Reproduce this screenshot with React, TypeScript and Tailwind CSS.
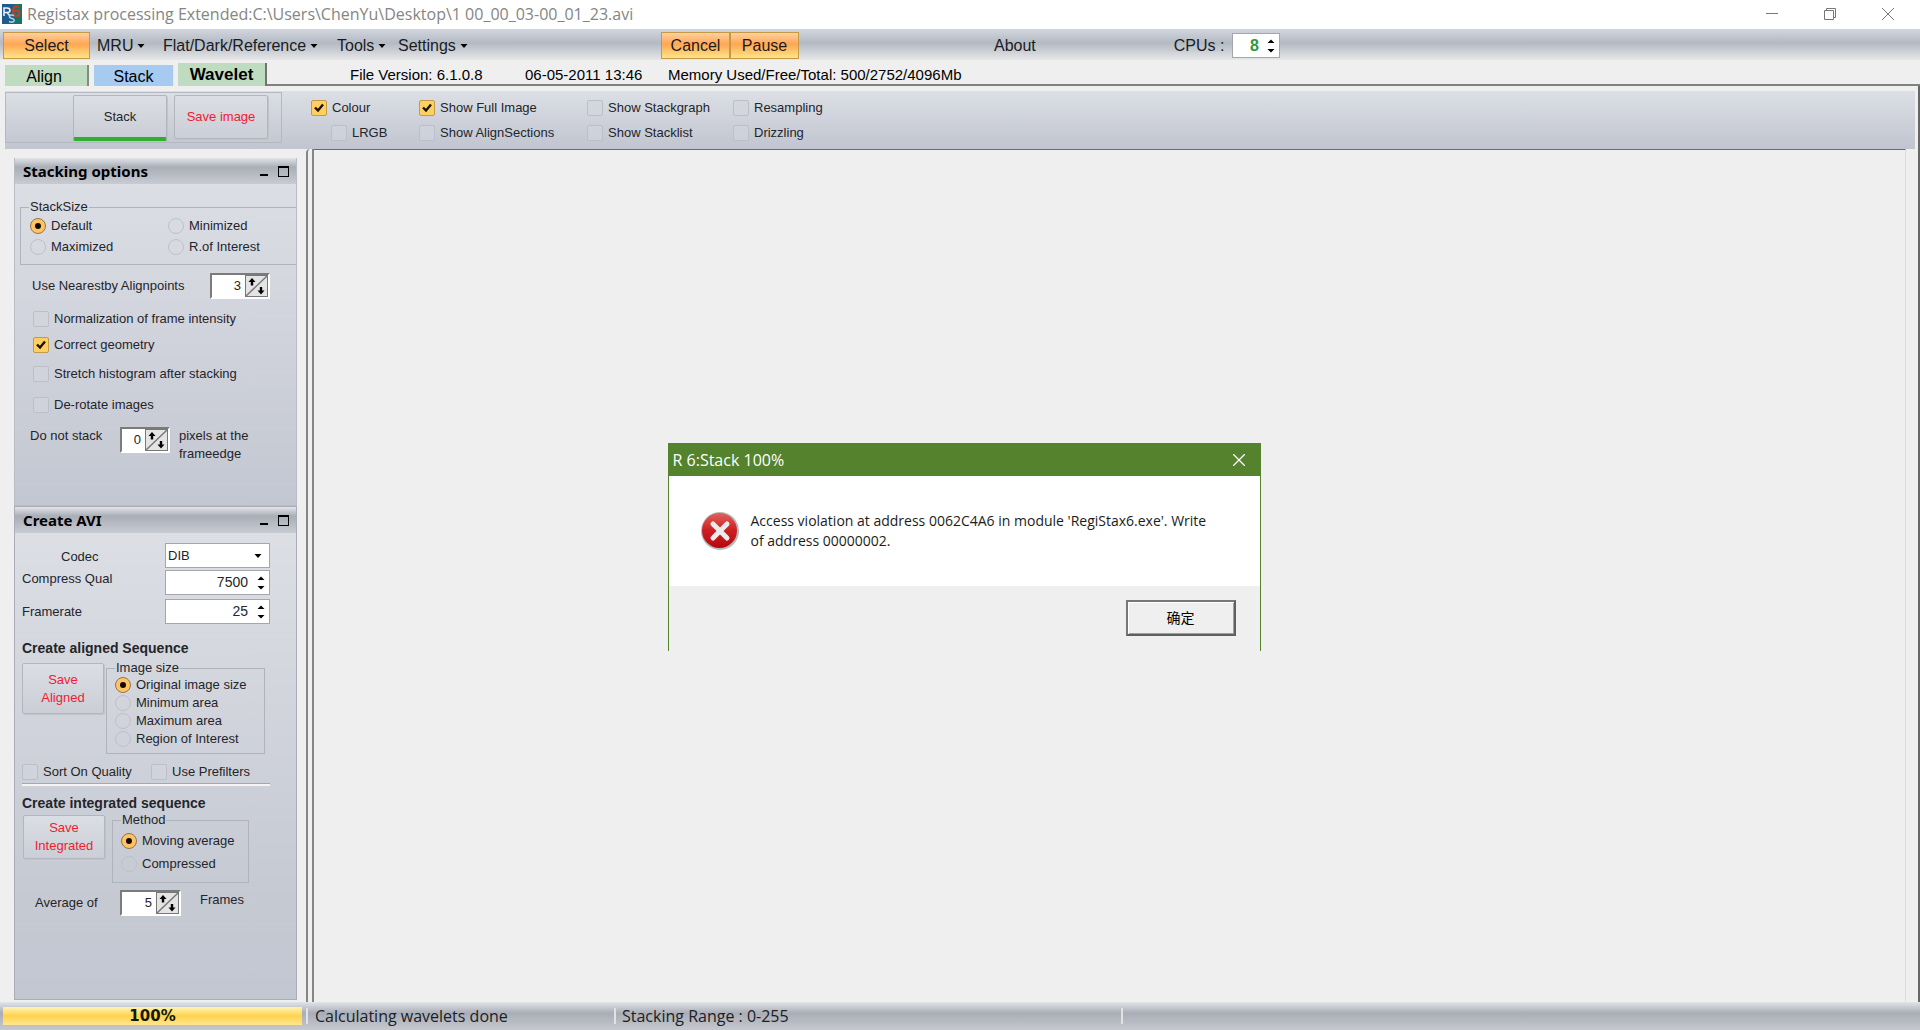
import { useState, type ReactNode } from "react"
import clsx from "clsx"

const menus = [
  { label: "MRU", className: "w-[66px]" },
  { label: "Flat/Dark/Reference", className: "w-[174px]" },
  { label: "Tools", className: "w-[61px]" },
  { label: "Settings", className: "w-[80px]" },
]

function Check({ label, checked = false, className }: { label: string; checked?: boolean; className?: string }) {
  return (
    <label className={clsx("flex h-4 items-center gap-[5px] whitespace-nowrap", className)}>
      <span className="relative flex size-4 shrink-0">
        <input
          type="checkbox"
          defaultChecked={checked}
          className="peer size-4 appearance-none rounded-[2px] border border-[#bbbfca] bg-[#d3d6dd]/60 checked:border-[#c29a4c] checked:bg-[#ffcf62]"
        />
        <svg viewBox="0 0 16 16" className="pointer-events-none absolute inset-0 hidden size-4 peer-checked:block">
          <path d="M4 7.5 L7 10.5 L12 4.5" fill="none" stroke="#1c1206" strokeWidth="2.4" />
        </svg>
      </span>
      {label}
    </label>
  )
}

function Radio({ name, label, checked = false }: { name: string; label: string; checked?: boolean }) {
  return (
    <label className="flex h-4 items-center gap-[5px] leading-4 whitespace-nowrap">
      <span className="relative flex size-4 shrink-0">
        <input
          type="radio"
          name={name}
          defaultChecked={checked}
          className="peer size-4 appearance-none rounded-full border border-[#bdc1ca] checked:border-[#96763f] checked:bg-[#ffc266]"
        />
        <span className="pointer-events-none absolute inset-[5px] hidden rounded-full bg-[#120b04] peer-checked:block" />
      </span>
      {label}
    </label>
  )
}

function ArrowSpin({ id, value, className }: { id: string; value: string; className?: string }) {
  return (
    <span className={clsx("flex h-[26px] border-2 border-t-[#7b7b7b] border-l-[#7b7b7b] border-r-white border-b-white bg-white", className)}>
      <input id={id} defaultValue={value} className="w-0 min-w-0 flex-1 bg-white pr-1 text-right text-[13px] outline-none" />
      <button aria-label="Change value" className="w-[23px] shrink-0 border border-[#777] bg-[#e4e4e4]">
        <svg viewBox="0 0 21 20" className="size-full">
          <path d="M0 20 L21 0" stroke="#777" strokeWidth="1.4" />
          <path d="M6 2 L9.5 6 H7.2 V9.5 H4.8 V6 H2.5 Z M15 18.5 L18.5 14.5 H16.2 V11 H13.8 V14.5 H11.5 Z" fill="#000" />
        </svg>
      </button>
    </span>
  )
}

function UpDown() {
  return (
    <svg viewBox="0 0 8 16" className="h-4 w-2">
      <path d="M4 1.5 L7.5 5 H0.5 Z M4 14.5 L0.5 11 H7.5 Z" fill="#000" />
    </svg>
  )
}

function PlainSpin({ id, value, className, inputClass }: { id: string; value: string; className?: string; inputClass?: string }) {
  return (
    <span className={clsx("flex h-[25px] items-center border border-[#a3a6ae] bg-white", className)}>
      <input id={id} defaultValue={value} className={clsx("w-0 min-w-0 flex-1 text-right outline-none", inputClass)} />
      <button aria-label="Change value" className="flex w-4 justify-center">
        <UpDown />
      </button>
    </span>
  )
}

function PanelHeader({ title }: { title: string }) {
  return (
    <header className="flex h-[26px] items-center bg-linear-to-b from-[#e2e4e9] via-[#a9aeb7] via-35% to-[#c8cbd2] pr-[7px] pl-2">
      <h2 className="flex-1 font-['Noto_Sans'] text-[15px] font-bold text-black">{title}</h2>
      <button aria-label="Minimize" className="mr-[10px] flex h-[11px] w-2 items-end">
        <span className="mb-px h-[2px] w-2 bg-black" />
      </button>
      <button aria-label="Maximize" className="h-[11px] w-[11px] border border-t-2 border-black" />
    </header>
  )
}

function RaisedButton({ children, className }: { children: ReactNode; className?: string }) {
  return (
    <button
      className={clsx(
        "rounded-[2px] border border-[#b3b6bf] bg-linear-to-b from-[#dcdee5] to-[#cbced6] text-[13px] leading-[18px] shadow-[1px_1px_0_#c0c3ca]",
        className,
      )}
    >
      {children}
    </button>
  )
}

function OrangeButton({ children, className }: { children: ReactNode; className?: string }) {
  return (
    <button
      className={clsx(
        "h-[27px] border border-[#c49a45] bg-linear-to-b from-[#ffcf9c] via-[#ffa653] via-45% to-[#ffe587] text-base",
        className,
      )}
    >
      {children}
    </button>
  )
}

function TitleBar() {
  return (
    <header className="flex h-[29px] items-start bg-white pl-[2px] text-[#858585]">
      <svg viewBox="0 0 20 20" className="mt-1 size-5">
        <rect width="20" height="20" fill="#1d5c8c" />
        <path d="M11 0 H20 V20 H11 Z" fill="#1a7368" />
        <path d="M2 12 V4 H5 Q8 4 8 6.5 Q8 8.5 5 8.5 H2 M5 8.5 L8 12" fill="none" stroke="#e8f3fa" strokeWidth="1.6" />
        <path d="M17 3 Q11 1 11 7 Q11 12 14.5 12 Q17.5 12 17.5 9 Q17.5 6.5 14.5 6.5 Q12 6.5 11 8" fill="none" stroke="#c2402a" strokeWidth="2" />
        <path d="M12 11.5 Q8 10 7.5 12.5 Q7.5 14 10 14.5 Q12.5 15 12 17 Q11 19 7 17.5" fill="none" stroke="#a8d8ee" strokeWidth="1.6" />
      </svg>
      <h1 className="ml-[5px] flex-1 font-['Open_Sans'] text-base leading-[29px]">
        Registax processing Extended:C:\Users\ChenYu\Desktop\1 00_00_03-00_01_23.avi
      </h1>
      <div className="flex h-[28px] items-center gap-[46px] pr-[26px]">
        <button aria-label="Minimize">
          <svg viewBox="0 0 12 12" className="size-3"><path d="M0 5.5 H12" stroke="#777" /></svg>
        </button>
        <button aria-label="Restore">
          <svg viewBox="0 0 12 12" className="size-3" fill="none" stroke="#777">
            <path d="M0.5 2.5 H9.5 V11.5 H0.5 Z M2.5 2.5 V0.5 H11.5 V9.5 H9.5" />
          </svg>
        </button>
        <button aria-label="Close">
          <svg viewBox="0 0 12 12" className="size-3"><path d="M0 0 L12 12 M12 0 L0 12" stroke="#777" /></svg>
        </button>
      </div>
    </header>
  )
}

function MenuBar() {
  return (
    <nav className="flex h-[31px] items-center bg-linear-to-b from-[#d3d6de] via-[#b3bac3] via-45% to-[#e6e7e9] pt-[2px] pl-[3px] text-base text-[#1b1b1f]">
      <OrangeButton className="w-[87px]">Select</OrangeButton>
      <div className="ml-[7px] flex w-[564px]">
        {menus.map((menu) => (
          <button key={menu.label} className={clsx("flex items-center gap-1", menu.className)}>
            {menu.label}
            <svg viewBox="0 0 8 4" className="h-1 w-2"><path d="M0.5 0 H7.5 L4 4 Z" fill="#000" /></svg>
          </button>
        ))}
      </div>
      <OrangeButton className="w-[69px]">Cancel</OrangeButton>
      <OrangeButton className="w-[69px]">Pause</OrangeButton>
      <button className="ml-[195px]">About</button>
      <label htmlFor="cpus" className="ml-[138px] w-[58px]">CPUs :</label>
      <PlainSpin id="cpus" value="8" className="w-[48px]" inputClass="pr-1 text-base font-bold text-[#2e9a3a]" />
    </nav>
  )
}

function TabRow() {
  return (
    <div className="flex h-[26px] items-end bg-[#efefef] pl-[5px] text-black">
      <div role="tablist" className="flex items-end text-base">
        <button role="tab" className="mr-[5px] h-[21px] w-[84px] border-r-2 border-[#858a85] bg-[#bfdcc0] pr-1 leading-[23px]">Align</button>
        <button role="tab" className="mr-1 h-[21px] w-20 border-r border-[#e4e9f0] bg-[#a6caf0] leading-[23px]">Stack</button>
        <button role="tab" aria-selected className="h-[23px] w-[89px] border-r-2 border-[#707570] bg-[#c0dcc0] text-[17px] leading-[22px] font-bold">Wavelet</button>
      </div>
      <div className="flex h-full flex-1 border-b-2 border-[#80827f] text-[15px] leading-[29px] whitespace-nowrap">
        <span className="ml-[83px] w-[175px]">File Version: 6.1.0.8</span>
        <span className="w-[143px]">06-05-2011 13:46</span>
        <span>Memory Used/Free/Total: 500/2752/4096Mb</span>
      </div>
    </div>
  )
}

function Toolbar() {
  return (
    <div className="mr-[3px] ml-[5px] flex h-[58px] bg-linear-to-b from-[#dcdfe5] to-[#c1c5cf]">
      <div className="mt-px flex h-[51px] w-[277px] items-start gap-[7px] border border-[#b4b8c1] pt-[2px] pl-[67px]">
        <RaisedButton className="h-[46px] w-[94px] border-b-4 border-b-[#2fae2f]">Stack</RaisedButton>
        <RaisedButton className="h-[44px] w-[94px] text-[#f01c30]">Save image</RaisedButton>
      </div>
      <div className="ml-[29px] flex pt-[9px]">
        <div className="flex w-[108px] flex-col gap-[9px]">
          <Check label="Colour" checked />
          <Check label="LRGB" className="ml-5" />
        </div>
        <div className="flex w-[168px] flex-col gap-[9px]">
          <Check label="Show Full Image" checked />
          <Check label="Show AlignSections" />
        </div>
        <div className="flex w-[146px] flex-col gap-[9px]">
          <Check label="Show Stackgraph" />
          <Check label="Show Stacklist" />
        </div>
        <div className="flex flex-col gap-[9px]">
          <Check label="Resampling" />
          <Check label="Drizzling" />
        </div>
      </div>
    </div>
  )
}

function StackingOptions() {
  return (
    <section className="h-[348px] border border-t-0 border-[#b9bcc5] bg-linear-to-b from-[#dee0e6] to-[#c3c7d1]">
      <PanelHeader title="Stacking options" />
      <fieldset className="mt-[15px] ml-[5px] h-[66px] border border-r-0 border-[#b0b3bc] pt-[3px] pl-[9px]">
        <legend className="-ml-px px-px leading-4">StackSize</legend>
        <div className="grid grid-cols-[138px_1fr] gap-y-[5px]">
          <Radio name="stacksize" label="Default" checked />
          <Radio name="stacksize" label="Minimized" />
          <Radio name="stacksize" label="Maximized" />
          <Radio name="stacksize" label="R.of Interest" />
        </div>
      </fieldset>
      <div className="mt-2 flex items-center pl-[17px]">
        <label htmlFor="alignpoints" className="w-[178px]">Use Nearestby Alignpoints</label>
        <ArrowSpin id="alignpoints" value="3" className="w-[60px]" />
      </div>
      <div className="flex flex-col pt-3 pl-[18px]">
        <Check label="Normalization of frame intensity" />
        <Check label="Correct geometry" checked className="mt-[10px]" />
        <Check label="Stretch histogram after stacking" className="mt-[13px]" />
        <Check label="De-rotate images" className="mt-[15px]" />
      </div>
      <div className="mt-[14px] flex items-start pl-[15px] leading-[18px]">
        <label htmlFor="edge" className="w-[90px]">Do not stack</label>
        <ArrowSpin id="edge" value="0" className="w-[50px]" />
        <span className="ml-[9px] w-20">pixels at the frameedge</span>
      </div>
    </section>
  )
}

function CreateAvi() {
  return (
    <section className="flex-1 border border-[#a9adb8] bg-linear-to-b from-[#dee0e6] via-[#c5c9d2] via-80% to-[#c3c7d1]">
      <PanelHeader title="Create AVI" />
      <div className="grid grid-cols-[143px_105px] pt-[10px] pl-[7px]">
        <label htmlFor="codec" className="pt-1 pl-[39px]">Codec</label>
        <span className="relative flex h-[25px]">
          <select id="codec" className="w-full appearance-none border border-[#a3a6ae] bg-white pl-[2px] text-[13px] outline-none">
            <option>DIB</option>
          </select>
          <svg viewBox="0 0 8 4" className="pointer-events-none absolute top-[11px] right-2 h-1 w-2">
            <path d="M0.5 0 H7.5 L4 4 Z" fill="#000" />
          </svg>
        </span>
        <label htmlFor="qual" className="pt-px">Compress Qual</label>
        <PlainSpin id="qual" value="7500" className="mt-[2px]" inputClass="pr-[5px] text-[14px]" />
        <label htmlFor="rate" className="pt-[7px]">Framerate</label>
        <PlainSpin id="rate" value="25" className="mt-1" inputClass="pr-[5px] text-[14px]" />
      </div>
      <h3 className="mt-4 pl-[7px] text-[14px] leading-4 font-bold">Create aligned Sequence</h3>
      <div className="flex items-start pl-[7px]">
        <RaisedButton className="mt-[7px] h-[51px] w-[82px] text-[#f01c30]">
          Save<br />Aligned
        </RaisedButton>
        <fieldset className="mt-1 ml-[2px] h-[94px] w-[159px] border border-[#b0b3bc] pl-2">
          <legend className="px-px leading-4">Image size</legend>
          <div className="flex flex-col gap-[2px] pt-px">
            <Radio name="imagesize" label="Original image size" checked />
            <Radio name="imagesize" label="Minimum area" />
            <Radio name="imagesize" label="Maximum area" />
            <Radio name="imagesize" label="Region of Interest" />
          </div>
        </fieldset>
      </div>
      <div className="mt-[10px] ml-[7px] flex w-[248px] border-b-2 border-[#f4f4f4] pb-1 shadow-[inset_0_-1px_0_#a5a8b0]">
        <Check label="Sort On Quality" className="w-[129px]" />
        <Check label="Use Prefilters" />
      </div>
      <h3 className="mt-[9px] pl-[7px] text-[14px] leading-4 font-bold">Create integrated sequence</h3>
      <div className="flex items-start pl-2">
        <RaisedButton className="mt-1 h-[44px] w-[82px] text-[#f01c30]">
          Save<br />Integrated
        </RaisedButton>
        <fieldset className="mt-px ml-[7px] h-[71px] w-[137px] border border-[#b0b3bc] pl-2">
          <legend className="px-px leading-4">Method</legend>
          <div className="flex flex-col gap-[7px] pt-[5px]">
            <Radio name="method" label="Moving average" checked />
            <Radio name="method" label="Compressed" />
          </div>
        </fieldset>
      </div>
      <div className="mt-[7px] flex items-start pl-5">
        <label htmlFor="average" className="mt-[3px] w-[85px]">Average of</label>
        <ArrowSpin id="average" value="5" className="w-[61px]" />
        <span className="ml-[19px]">Frames</span>
      </div>
    </section>
  )
}

function StatusBar() {
  return (
    <footer className="flex h-[28px] items-center bg-linear-to-b from-[#e3e4ea] via-[#a9adb6] via-40% to-[#c6c8ce] pl-[3px] font-['Open_Sans'] text-base text-[#202024]">
      <div
        role="progressbar"
        aria-valuenow={100}
        className="h-[18px] w-[299px] bg-linear-to-b from-[#fff3b0] via-[#ffd24a] via-50% to-[#ffe78c] text-center font-['DejaVu_Sans'] text-[15px] leading-[18px] font-bold text-[#141a00]"
      >
        100%
      </div>
      <span className="ml-1 h-4 w-[308px] border-l-2 border-[#e2e2e2] pl-[7px] leading-4">Calculating wavelets done</span>
      <span className="h-4 w-[507px] border-l-2 border-[#e2e2e2] pl-[6px] leading-4">Stacking Range : 0-255</span>
      <span className="h-4 border-l-2 border-[#e2e2e2]" />
    </footer>
  )
}

function ErrorDialog({ onClose }: { onClose: () => void }) {
  return (
    <div className="fixed inset-x-0 top-[443px] flex justify-center pl-2">
      <div role="alertdialog" aria-labelledby="error-title" className="w-[593px] border-x border-[#55822d] bg-[#efefef]">
        <div className="flex h-[33px] items-center bg-[#55822d] pr-[15px] pl-1 text-white">
          <h2 id="error-title" className="flex-1 font-['Open_Sans'] text-base">R 6:Stack 100%</h2>
          <button aria-label="Close" onClick={onClose}>
            <svg viewBox="0 0 12 12" className="size-3"><path d="M0 0 L12 12 M12 0 L0 12" stroke="#fff" strokeWidth="1.3" /></svg>
          </button>
        </div>
        <div className="flex h-[110px] items-start bg-white pt-[35px] pl-[31px]">
          <svg viewBox="0 0 40 40" className="size-10">
            <defs>
              <linearGradient id="red" x1="0" y1="0" x2="0" y2="1">
                <stop offset="0" stopColor="#e2605c" />
                <stop offset="0.5" stopColor="#cc1f22" />
                <stop offset="1" stopColor="#b3090f" />
              </linearGradient>
            </defs>
            <circle cx="20" cy="20" r="19" fill="#b9b9b9" />
            <circle cx="19.5" cy="19.5" r="17.5" fill="url(#red)" />
            <path d="M13 13 L27 27 M27 13 L13 27" stroke="#ececec" strokeWidth="5" strokeLinecap="round" />
          </svg>
          <p className="ml-[11px] w-[470px] font-['Open_Sans'] text-[14px] leading-5 text-[#1c1c1c]">
            Access violation at address 0062C4A6 in module 'RegiStax6.exe'. Write of address 00000002.
          </p>
        </div>
        <div className="flex h-[65px] justify-end pt-[14px] pr-6">
          <button
            onClick={onClose}
            className="h-[36px] w-[110px] border-2 border-t-[#777] border-r-[#5f5f5f] border-b-[#5f5f5f] border-l-[#777] bg-[#efefef] pb-[3px] font-['Noto_Sans_CJK_SC',sans-serif] text-[14px] leading-4 text-black shadow-[inset_1px_1px_0_#fff,inset_-1px_-1px_0_#a0a0a0]"
          >
            确定
          </button>
        </div>
      </div>
    </div>
  )
}

export default function App() {
  const [showError, setShowError] = useState(true)

  return (
    <div className="flex min-h-screen flex-col bg-[#efefef] font-['Liberation_Sans',Arial,sans-serif] text-[13px] text-[#24252b]">
      <TitleBar />
      <MenuBar />
      <TabRow />
      <main className="flex flex-1 flex-col border-r-2 border-[#666] pt-[5px]">
        <Toolbar />
        <div className="flex flex-1">
          <aside className="flex w-[306px] flex-col pt-[9px] pr-[9px] pb-[2px] pl-[14px]">
            <StackingOptions />
            <CreateAvi />
          </aside>
          <div className="w-2 rounded-tl border-r-2 border-l-2 border-[#858585] bg-[#efefef]" />
          <div className="mr-3 flex-1 border-t border-r border-t-[#6a6a6a] border-r-[#dcdcdc]" />
        </div>
      </main>
      <StatusBar />
      {showError && <ErrorDialog onClose={() => setShowError(false)} />}
    </div>
  )
}
